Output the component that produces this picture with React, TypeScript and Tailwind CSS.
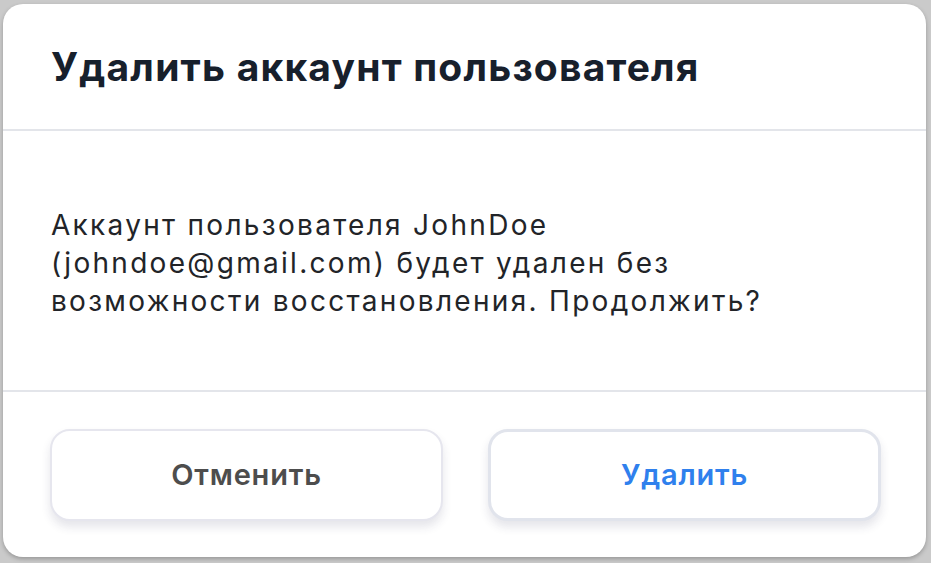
import React from "react";

const font = { fontFamily: "Inter, 'Noto Sans', sans-serif" };

const DeleteUserDialog = () => {
  return (
    <div className="w-[923px] h-[553px] bg-white rounded-[20px] shadow-[0_2px_4px_rgba(0,0,0,0.25)] flex flex-col overflow-hidden">
      <div className="h-[127px] px-[48px] flex items-center border-b-2 border-[#e3e5ea]">
        <h1 className="text-[39px] font-bold text-[#17202c] tracking-[1.2px] pt-[2px]">
          Удалить аккаунт пользователя
        </h1>
      </div>
      <div className="h-[261px] px-[48px] flex items-center border-b-2 border-[#e3e5ea]">
        <p className="text-[28px] leading-[38px] tracking-[2.3px] text-[#222428] pt-[5px]">
          Аккаунт пользователя JohnDoe
          <br />
          (johndoe@gmail.com) будет удален без
          <br />
          возможности восстановления. Продолжить?
        </p>
      </div>
      <div className="flex-1 flex items-start gap-[45px] pl-[47px] pt-[37px]">
        <button className="w-[393px] h-[92px] rounded-[20px] bg-white border-2 border-[#e6e6ee] shadow-[0_6px_10px_rgba(40,40,80,0.12)] text-[29px] font-semibold tracking-[0.8px] text-[#4d4d4d]">
          Отменить
        </button>
        <button className="w-[393px] h-[92px] rounded-[20px] bg-white border-[3px] border-[#e1e4ec] shadow-[0_6px_10px_rgba(40,40,80,0.12)] text-[29px] font-semibold tracking-[0.8px] text-[#2f80ed]">
          Удалить
        </button>
      </div>
    </div>
  );
};

export default function App() {
  return (
    <div className="w-[931px] h-[563px] bg-[#cacaca] pt-[4px] pl-[3px]" style={font}>
      <DeleteUserDialog />
    </div>
  );
}
